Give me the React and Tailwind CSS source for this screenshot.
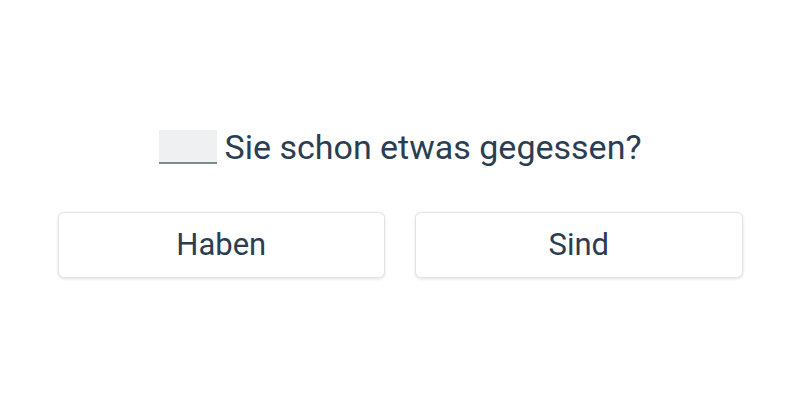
import React from 'react';

const App = () => {
  const options = ['Haben', 'Sind'];

  return (
    <div className="w-full h-[400px] pt-[8px] bg-white flex flex-col items-center justify-center font-['Roboto',sans-serif] text-[#2b3d53]">
      {/* question with blank */}
      <div className="flex items-center h-[34px] text-[34px] leading-none">
        <span className="inline-block w-[58px] h-[34px] bg-[#eff0f2] border-b-2 border-[#7f8c8d] mr-[8px]" />
        <span>Sie schon etwas gegessen?</span>
      </div>

      {/* answer options */}
      <div className="grid grid-cols-2 gap-[30px] w-[685px] mt-[48px]">
        {options.map((opt) => (
          <button
            key={opt}
            className="h-[66px] bg-white border border-[#e2e4e7] rounded-[6px] shadow-[0_1px_3px_rgba(0,0,0,0.12)] text-[31px] text-[#2b3d53]"
          >
            {opt}
          </button>
        ))}
      </div>
    </div>
  );
};

export default App;
